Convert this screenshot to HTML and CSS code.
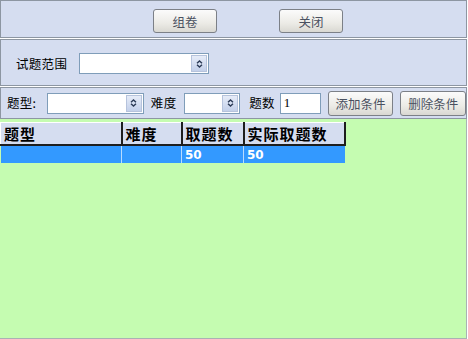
FILE: index.html
```html
<!DOCTYPE html>
<html lang="zh-CN">
<head>
    <meta charset="UTF-8">
    <title>组卷</title>
    <link rel="stylesheet" href="styles.css">
</head>
<body>

    <div id="page">

        <div class="bar bar-actions">
            <button class="btn">组卷</button>
            <button class="btn btn-close">关闭</button>
        </div>

        <div class="bar bar-range">
            <span class="label">试题范围</span>
            <div class="combo combo-range">
                <span class="combo-arrow">
                    <svg width="7" height="8" viewBox="0 0 7 8"><path d="M1 3.2 L3.5 1 L6 3.2 M1 4.8 L3.5 7 L6 4.8" fill="none" stroke="#2b3a55" stroke-width="1.4"/></svg>
                </span>
            </div>
        </div>

        <div class="bar bar-filter">
            <span class="label">题型:</span>
            <div class="combo combo-type">
                <span class="combo-arrow">
                    <svg width="7" height="8" viewBox="0 0 7 8"><path d="M1 3.2 L3.5 1 L6 3.2 M1 4.8 L3.5 7 L6 4.8" fill="none" stroke="#2b3a55" stroke-width="1.4"/></svg>
                </span>
            </div>
            <span class="label">难度</span>
            <div class="combo combo-level">
                <span class="combo-arrow">
                    <svg width="7" height="8" viewBox="0 0 7 8"><path d="M1 3.2 L3.5 1 L6 3.2 M1 4.8 L3.5 7 L6 4.8" fill="none" stroke="#2b3a55" stroke-width="1.4"/></svg>
                </span>
            </div>
            <span class="label">题数</span>
            <input type="text" class="count" value="1">
            <button class="btn btn-small">添加条件</button>
            <button class="btn btn-small">删除条件</button>
        </div>

        <div class="grid-area">
            <table class="grid">
                <tr>
                    <th class="col-type">题型</th>
                    <th class="col-level">难度</th>
                    <th class="col-num">取题数</th>
                    <th class="col-real">实际取题数</th>
                </tr>
                <tr class="selected">
                    <td></td>
                    <td></td>
                    <td>50</td>
                    <td>50</td>
                </tr>
            </table>
        </div>

    </div>

</body>
</html>
```

FILE: styles.css
```css
body {
    margin: 0;
    background-color: #fff;
    font-family: "Noto Sans CJK SC", "DejaVu Sans", sans-serif;
    font-size: 12px;
    color: #000;
}

#page {
    width: 467px;
}

.bar {
    box-sizing: border-box;
    border: 1px solid #8d96a2;
    background-color: #d5ddf0;
    margin-bottom: 1px;
    display: flex;
    align-items: center;
}

.bar-actions {
    height: 38px;
    padding-left: 152px;
    gap: 62px;
    padding-top: 4px;
}

.bar-range {
    height: 47px;
    padding-left: 15px;
    padding-top: 2px;
}

.bar-range .label {
    margin-right: 12px;
}

.bar-filter {
    height: 32px;
    padding-left: 6px;
    margin-bottom: 0;
}

.label {
    font-size: 12.5px;
    line-height: 16px;
    letter-spacing: 0.3px;
    white-space: nowrap;
}

.btn {
    box-sizing: border-box;
    width: 64px;
    height: 24px;
    padding: 0;
    font-family: inherit;
    font-size: 12.5px;
    color: #4a5160;
    border: 1px solid #7c8087;
    border-radius: 3px;
    background: linear-gradient(#fbfbfb, #ecebe6 60%, #d9d8d2);
    cursor: pointer;
}

.btn-small {
    width: 66px;
    height: 25px;
    margin-left: 7px;
}

.combo {
    box-sizing: border-box;
    height: 21px;
    border: 1px solid #7f9db9;
    background-color: #fff;
    display: flex;
    justify-content: flex-end;
    align-items: center;
    padding-right: 1px;
}

.combo-arrow {
    box-sizing: border-box;
    width: 16px;
    height: 17px;
    border: 1px solid #b6c3dc;
    background: linear-gradient(#e6ecf8, #c3d0ea);
    display: flex;
    align-items: center;
    justify-content: center;
}

.combo-range {
    width: 130px;
}

.combo-type {
    width: 97px;
    margin-left: 11px;
    margin-right: 7px;
}

.combo-level {
    width: 56px;
    margin-left: 8px;
    margin-right: 9px;
}

.count {
    box-sizing: border-box;
    width: 41px;
    height: 21px;
    margin-left: 5px;
    padding: 0 3px;
    border: 1px solid #7f9db9;
    font-family: "Liberation Serif", serif;
    font-size: 13px;
}

.grid-area {
    box-sizing: border-box;
    height: 220px;
    background-color: #c5fcb1;
    border-right: 1px solid #a9b2b4;
    border-bottom: 1px solid #a9b2b4;
    padding-top: 3px;
}

.grid {
    border-collapse: collapse;
}

.grid th {
    box-sizing: border-box;
    height: 22px;
    padding: 0 0 0 3px;
    text-align: left;
    font-size: 15px;
    font-weight: bold;
    letter-spacing: 1px;
    background-color: #d5ddf0;
    border-top: 1px solid #fff;
    border-left: 1px solid #fff;
    border-right: 2px solid #1e1e1e;
    border-bottom: 2px solid #1e1e1e;
}

.col-type {
    width: 121px;
}

.col-level {
    width: 60px;
}

.col-num {
    width: 62px;
}

.col-real {
    width: 101px;
}

.grid td {
    height: 17px;
    padding: 0 0 0 3px;
    font-family: "DejaVu Sans", sans-serif;
    font-size: 12px;
    font-weight: bold;
    color: #fff;
    border-right: 1px solid #b9dcff;
}

.selected td {
    background-color: #3399ff;
}

.selected td:last-child {
    border-right: none;
}
```
